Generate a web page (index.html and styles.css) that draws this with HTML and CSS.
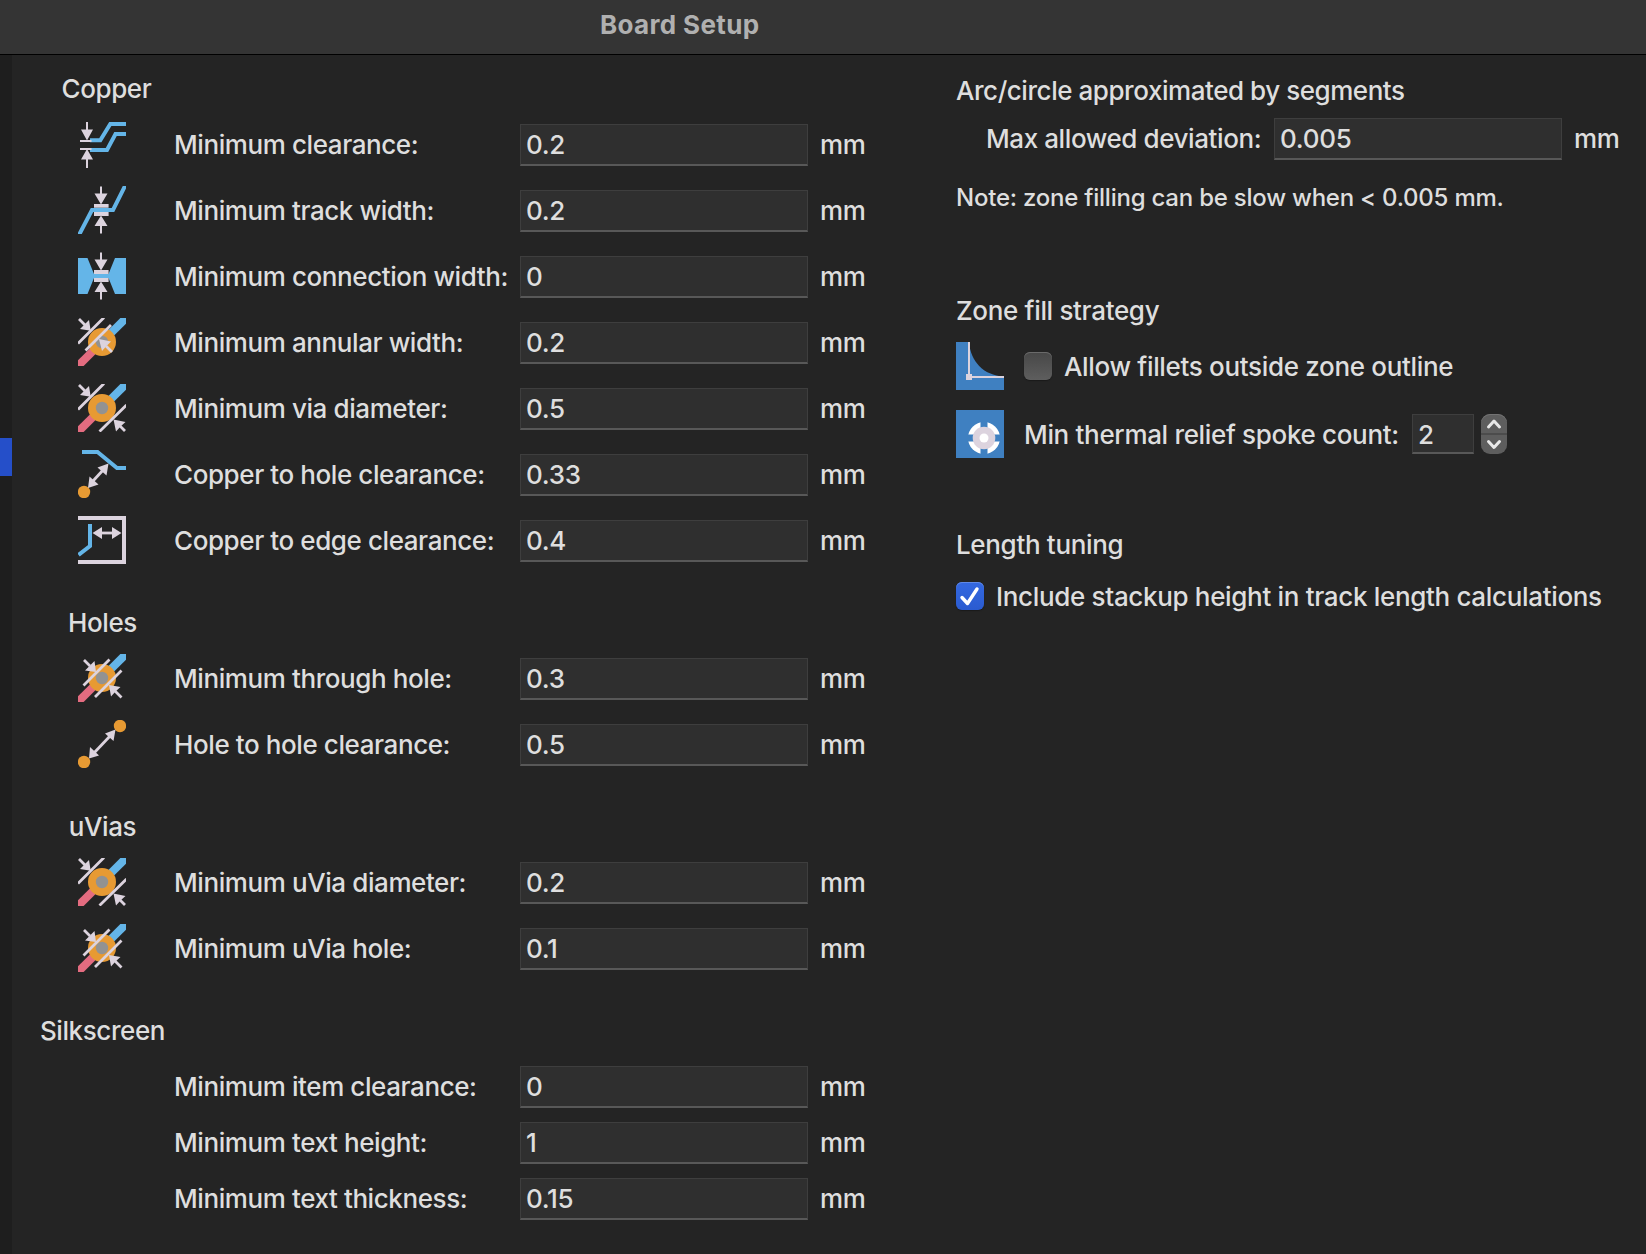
FILE: index.html
```html
<!DOCTYPE html>
<html lang="en">
<head>
<meta charset="utf-8">
<title>Board Setup</title>
<link rel="stylesheet" href="styles.css">
</head>
<body>
<svg class="defs" aria-hidden="true">
  <symbol id="i-clearance" viewBox="0 0 48 48">
    <g class="blue-line"><path d="M12 20.3H22.3L32.3 4H48"/><path d="M12 30H29L37.5 14H48"/></g>
    <path class="thin" d="M9 2V12M9 38V48M2 21H13.5M2 29H13.5"/>
    <path class="pale" d="M3 9.5H15L9 20.5ZM3 39.5H15L9 29Z"/>
  </symbol>
  <symbol id="i-track" viewBox="0 0 48 48">
    <path class="pale" d="M16 18H30.6V21.8H16ZM16 26H30.6V29.9H16ZM16.5 7.5H29.5L23 18.5ZM16.5 40H29.5L23 29.5Z"/>
    <path class="thin" d="M23 .5V10M23 38V47.5"/>
    <path class="blue-line" d="M1 49L14 24H35L47.5 -1"/>
  </symbol>
  <symbol id="i-connection" viewBox="0 0 48 48">
    <path class="blue" d="M0 6H9.5L16 22H30.5L37 6H48V42H37L30.5 26H16L9.5 42H0Z"/>
    <path class="pale" d="M16 18H30.6V22H16ZM16 26H30.6V29.9H16ZM16.5 7.5H29.5L23 18.5ZM16.5 40H29.5L23 29.5Z"/>
    <path class="thin" d="M23 .5V10M23 38V47.5"/>
  </symbol>
  <symbol id="i-via" viewBox="0 0 48 48">
    <path class="blue-track" d="M31 17L45.5 2.5"/>
    <path class="red-track" d="M17 31L2.5 45.5"/>
    <circle class="orange" cx="24" cy="24" r="14"/>
    <circle class="gray" cx="24" cy="24" r="6.2"/>
  </symbol>
  <symbol id="i-annular" viewBox="0 0 48 48">
    <use href="#i-via"/>
    <path class="mid" d="M0 25.5L26 -.5M7.5 32.5L33 7M1 1L7 7M28 28L34 34"/>
    <path class="pale" d="M12.7 12.7L11 2L7 6L6 7L2 11ZM21 21L33 23.5L28.5 28L24 33Z"/>
  </symbol>
  <symbol id="i-diameter" viewBox="0 0 48 48">
    <use href="#i-via"/>
    <path class="mid" d="M0 25.5L26 -.5M21.5 47.5L48.5 21M1 1L7 7M41 41L47 47"/>
    <path class="pale" d="M12.7 12.7L11 2L7 6L6 7L2 11ZM35.5 35.5L47.5 38L42.5 42.5L38 47.5Z"/>
  </symbol>
  <symbol id="i-hole" viewBox="0 0 48 48">
    <use href="#i-via"/>
    <path class="mid" d="M5.5 31.5L31.5 5.5M17 43L43.5 16.5M6 6L12 12M37 37L43.5 43.5"/>
    <path class="pale" d="M18 18L16.5 7L12.5 11L7 16.5ZM31 31L42.5 33L37.5 37.5L33 42.5Z"/>
  </symbol>
  <symbol id="i-copper-hole" viewBox="0 0 48 48">
    <path class="blue-line" d="M4 2H19.5L39 18H48"/>
    <circle class="orange" cx="6" cy="42" r="6.2"/>
    <path class="mid" d="M15 31L26 19"/>
    <path class="pale" d="M30.5 13.5L28.5 25.5L19.5 17.5ZM10 38L11.5 26.5L20.5 34.5Z"/>
  </symbol>
  <symbol id="i-edge" viewBox="0 0 48 48">
    <path class="frame" d="M0 2H46V46H0"/>
    <path class="blue-line" d="M12 8V30L.5 39"/>
    <path class="mid" d="M20 17H38"/>
    <path class="pale" d="M14.5 17L24 11V23ZM43.5 17L34 11V23Z"/>
  </symbol>
  <symbol id="i-hole-hole" viewBox="0 0 48 48">
    <circle class="orange" cx="6" cy="42" r="6.2"/>
    <circle class="orange" cx="42" cy="6" r="6.2"/>
    <path class="mid" d="M15 34L33 15"/>
    <path class="pale" d="M37.5 9.5L35.5 21L27 13.5ZM11 38.5L12 27L21 35.5Z"/>
  </symbol>
</svg>

<header class="titlebar"><h1>Board Setup</h1></header>
<div class="window">
  <aside class="sidebar"><div class="selected"></div></aside>
  <main class="constraints">
    <section class="group">
      <h2 class="copper">Copper</h2>
      <div class="row"><svg class="icon"><use href="#i-clearance"/></svg><label class="label">Minimum clearance:</label><div class="field">0.2</div><span class="unit">mm</span></div>
      <div class="row"><svg class="icon"><use href="#i-track"/></svg><label class="label">Minimum track width:</label><div class="field">0.2</div><span class="unit">mm</span></div>
      <div class="row"><svg class="icon"><use href="#i-connection"/></svg><label class="label">Minimum connection width:</label><div class="field">0</div><span class="unit">mm</span></div>
      <div class="row"><svg class="icon"><use href="#i-annular"/></svg><label class="label">Minimum annular width:</label><div class="field">0.2</div><span class="unit">mm</span></div>
      <div class="row"><svg class="icon"><use href="#i-diameter"/></svg><label class="label">Minimum via diameter:</label><div class="field">0.5</div><span class="unit">mm</span></div>
      <div class="row"><svg class="icon"><use href="#i-copper-hole"/></svg><label class="label">Copper to hole clearance:</label><div class="field">0.33</div><span class="unit">mm</span></div>
      <div class="row"><svg class="icon"><use href="#i-edge"/></svg><label class="label">Copper to edge clearance:</label><div class="field">0.4</div><span class="unit">mm</span></div>
    </section>
    <section class="group">
      <h2>Holes</h2>
      <div class="row"><svg class="icon"><use href="#i-hole"/></svg><label class="label">Minimum through hole:</label><div class="field">0.3</div><span class="unit">mm</span></div>
      <div class="row"><svg class="icon"><use href="#i-hole-hole"/></svg><label class="label">Hole to hole clearance:</label><div class="field">0.5</div><span class="unit">mm</span></div>
    </section>
    <section class="group">
      <h2>uVias</h2>
      <div class="row"><svg class="icon"><use href="#i-diameter"/></svg><label class="label">Minimum uVia diameter:</label><div class="field">0.2</div><span class="unit">mm</span></div>
      <div class="row"><svg class="icon"><use href="#i-hole"/></svg><label class="label">Minimum uVia hole:</label><div class="field">0.1</div><span class="unit">mm</span></div>
    </section>
    <section class="group compact">
      <h2>Silkscreen</h2>
      <div class="row"><span></span><label class="label">Minimum item clearance:</label><div class="field">0</div><span class="unit">mm</span></div>
      <div class="row"><span></span><label class="label">Minimum text height:</label><div class="field">1</div><span class="unit">mm</span></div>
      <div class="row"><span></span><label class="label">Minimum text thickness:</label><div class="field">0.15</div><span class="unit">mm</span></div>
    </section>
  </main>

  <div class="options">
    <section class="arc">
      <h2>Arc/circle approximated by segments</h2>
      <div class="deviation"><label class="label">Max allowed deviation:</label><div class="field">0.005</div><span class="unit">mm</span></div>
      <p class="note">Note: zone filling can be slow when &lt; 0.005 mm.</p>
    </section>
    <section class="zone">
      <h2>Zone fill strategy</h2>
      <div class="option">
        <svg class="icon" viewBox="0 0 48 48">
          <path class="zone-fill" d="M0 0H48V48H0Z"/>
          <path class="cut" d="M13 0C14.5 19 27 33.5 48 34.5V0Z"/>
          <path class="thin" d="M13 0V35H48"/>
          <path class="pale" d="M10 32H16V38H10Z"/>
        </svg>
        <span class="check"></span><label class="label">Allow fillets outside zone outline</label>
      </div>
      <div class="option">
        <svg class="icon" viewBox="0 0 48 48">
          <path class="zone-fill" d="M0 0H48V48H0Z"/>
          <circle class="white" cx="28" cy="28" r="16"/>
          <path class="spokes" d="M28 11V45M11 28H45"/>
          <circle class="pale" cx="28" cy="28" r="11.3"/>
          <circle class="white" cx="28" cy="28" r="4.5"/>
        </svg>
        <label class="label spoke">Min thermal relief spoke count:</label>
        <div class="field small">2</div>
        <svg class="stepper" viewBox="0 0 26 40">
          <path class="divider" d="M0 20H26"/>
          <path class="chevron" d="M7.5 13L13 7L18.5 13M7.5 27.5L13 33.5L18.5 27.5"/>
        </svg>
      </div>
    </section>
    <section class="length">
      <h2>Length tuning</h2>
      <div class="option">
        <span class="check on"><svg viewBox="0 0 28 28"><path d="M6 15.5L11.5 21.5L21 7"/></svg></span>
        <label class="label">Include stackup height in track length calculations</label>
      </div>
    </section>
  </div>
</div>
</body>
</html>
```
FILE: styles.css
```css
* { box-sizing: border-box; }
body {
  margin: 0;
  height: 1254px;
  display: flex;
  flex-direction: column;
  overflow: hidden;
  background: #242424;
  color: #dedede;
  font: 450 26px/32px Inter, "Liberation Sans", sans-serif;
  letter-spacing: -0.41px;
}
h1, h2, p { margin: 0; font: inherit; white-space: nowrap; }
.defs { display: none; }

.titlebar {
  flex: none;
  height: 55px;
  padding: 9px 0 0 600px;
  background: #343434;
  border-bottom: 1px solid #000;
}
.titlebar h1 { font-weight: 700; color: #b0b0b0; letter-spacing: 0.35px; }

.window { flex: 1; display: flex; }
.sidebar { flex: none; width: 12px; padding-top: 383px; background: #1e1e1e; }
.selected { height: 38px; background: #254fc9; }

/* Left column */
.constraints {
  flex: none;
  width: 944px;
  padding-top: 18px;
  display: flex;
  flex-direction: column;
  gap: 34px;
}
.group h2 { width: 181px; margin-bottom: 6px; text-align: center; }
.group h2.copper { padding-left: 8px; }
.group.compact h2 { margin-bottom: 11px; }
.row {
  height: 66px;
  padding-left: 66px;
  display: grid;
  grid-template-columns: 96px 346px 300px auto;
  align-items: center;
}
.compact .row { height: 56px; }
.icon { width: 48px; height: 48px; flex: none; display: block; }
.label, .unit { white-space: nowrap; padding-top: 2px; }
.field {
  width: 288px;
  height: 42px;
  margin-top: 2px;
  padding: 4px 5px;
  background: #2f2f2f;
  border: 1px solid #3e3e3e;
  border-bottom: 2px solid #585858;
  letter-spacing: -0.3px;
}

/* Right column */
.options { flex: 1; padding-top: 20px; }
.arc h2 { letter-spacing: -0.45px; }
.deviation { display: flex; align-items: center; height: 44px; margin-top: 10px; padding-left: 30px; }
.deviation .label { width: 288px; }
.deviation .label, .deviation .unit { padding-top: 0; }
.deviation .field { margin: 0 12px 0 0; }
.note { margin-top: 21px; font-size: 24px; letter-spacing: -0.23px; }
.zone { margin-top: 81px; }
.zone, .length { letter-spacing: -0.33px; }
.option { display: flex; align-items: center; }
.option .label { padding-top: 1px; }
.zone .option { height: 48px; }
.zone .option + .option { margin-top: 20px; }
.zone h2 { margin-bottom: 15px; }
.check {
  flex: none;
  width: 28px;
  height: 28px;
  margin-right: 12px;
  border-radius: 6px;
  background: linear-gradient(#474747, #5e5e5e);
  box-shadow: inset 0 1px #6a6a6a, 0 1px 1px #1a1a1a;
}
.icon + .check { margin-left: 20px; }
.check.on { background: linear-gradient(#3468e0, #2a5bd0); box-shadow: inset 0 1px #5f88e6, 0 1px 1px #1a1a1a; }
.check svg { display: block; }
.check path { fill: none; stroke: #fff; stroke-width: 3.4; stroke-linecap: round; stroke-linejoin: round; }
.spoke { width: 388px; margin-left: 20px; }
.spoke + .field { width: 62px; height: 40px; margin: 0 7px 0 0; }
.stepper { width: 26px; height: 40px; border-radius: 9px; background: #5e5e5e; box-shadow: inset 0 1px #737373; }
.divider { stroke: #474747; stroke-width: 1.5; }
.chevron { fill: none; stroke: #e8e8e8; stroke-width: 3; stroke-linecap: round; stroke-linejoin: round; }
.length { margin-top: 71px; }
.length .option { height: 54px; margin-top: 8px; }

/* Icon parts */
.pale { fill: #dcd3de; }
.white { fill: #fff; }
.blue { fill: #64b5e8; }
.orange { fill: #e79a33; }
.gray { fill: #929292; }
.zone-fill { fill: #3f80c1; }
.cut { fill: #242424; }
.thin, .mid, .frame, .blue-line, .blue-track, .red-track, .spokes { fill: none; }
.thin { stroke: #dcd3de; stroke-width: 2; }
.mid { stroke: #dcd3de; stroke-width: 2.8; }
.frame { stroke: #dcd3de; stroke-width: 4; }
.blue-line { stroke: #64b5e8; stroke-width: 4; }
.blue-track { stroke: #64b5e8; stroke-width: 8; stroke-linecap: round; }
.red-track { stroke: #e46c80; stroke-width: 8; stroke-linecap: round; }
.spokes { stroke: #3f80c1; stroke-width: 7; }
```
